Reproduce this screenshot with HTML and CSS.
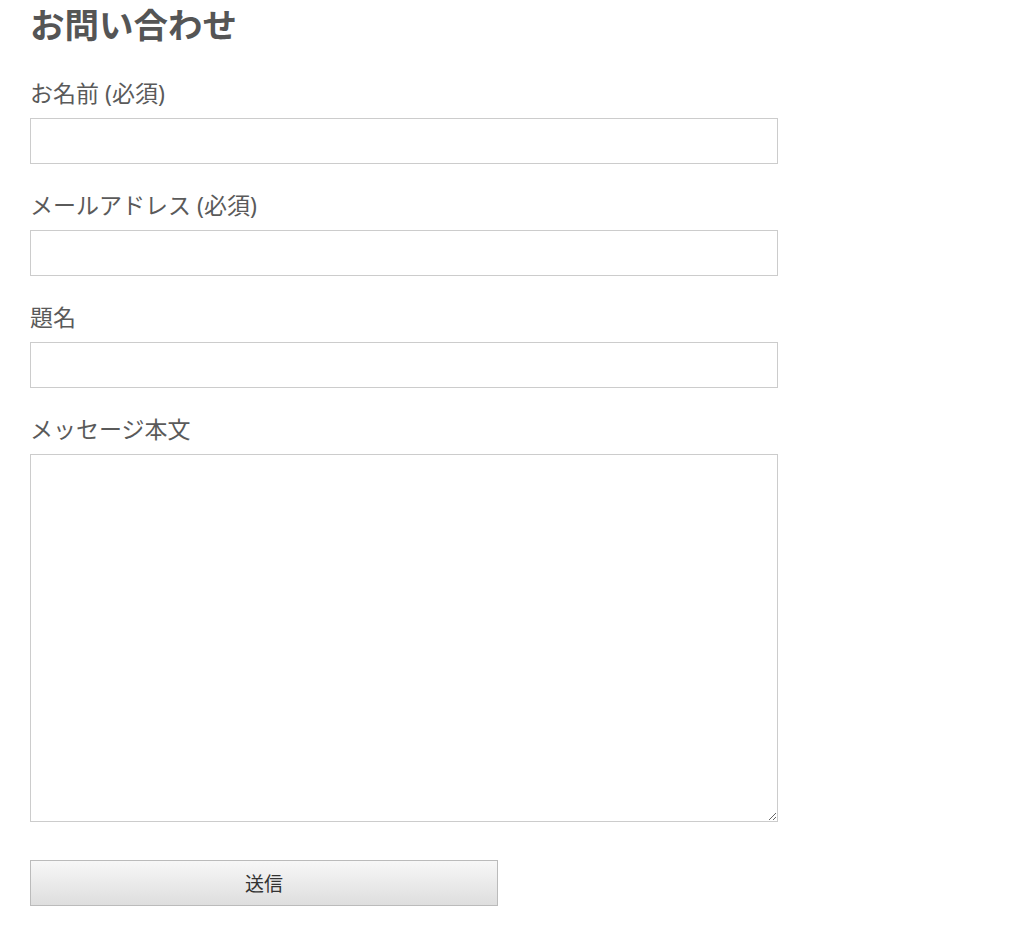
FILE: index.html
```html
<!DOCTYPE html>
<html lang="ja">
<head>
    <meta charset="UTF-8">
    <meta name="viewport" content="width=device-width, initial-scale=1.0">
    <title>お問い合わせ</title>
    <link rel="stylesheet" href="styles.css">
</head>
<body>
    <div class="contact-page">
        <h1 class="contact-title">お問い合わせ</h1>

        <form class="contact-form" onsubmit="return false;">
            <p class="form-field">
                <label for="your-name">お名前 (必須)</label>
                <input type="text" id="your-name" class="form-input">
            </p>
            <p class="form-field">
                <label for="your-email">メールアドレス (必須)</label>
                <input type="email" id="your-email" class="form-input">
            </p>
            <p class="form-field">
                <label for="your-subject">題名</label>
                <input type="text" id="your-subject" class="form-input">
            </p>
            <p class="form-field">
                <label for="your-message">メッセージ本文</label>
                <textarea id="your-message" class="form-input form-textarea"></textarea>
            </p>
            <p class="form-submit">
                <button type="submit" class="submit-button">送信</button>
            </p>
        </form>
    </div>
</body>
</html>
```

FILE: styles.css
```css
* {
    margin: 0;
    padding: 0;
    box-sizing: border-box;
}

body {
    font-family: "Noto Sans", "Noto Sans CJK JP", sans-serif;
    background: #fff;
    color: #555;
}

.contact-page {
    padding: 0 30px;
    width: 808px;
}

.contact-title {
    font-size: 34.5px;
    font-weight: 700;
    line-height: 50px;
    color: #555;
    margin-bottom: 30px;
}

.form-field {
    margin-bottom: 28px;
}

.form-field label {
    display: block;
    font-size: 23px;
    line-height: 26px;
    margin-bottom: 12px;
    color: #5a5a5a;
}

.form-input {
    display: block;
    width: 748px;
    height: 46px;
    border: 1px solid #ccc;
    background: #fff;
    font-family: inherit;
    font-size: 18px;
    padding: 0 10px;
}

.form-textarea {
    height: 368px;
    padding: 10px;
    resize: vertical;
}

.form-submit {
    margin-top: 38px;
}

.submit-button {
    width: 468px;
    height: 46px;
    border: 1px solid #bbb;
    background: linear-gradient(to bottom, #f7f7f7, #dedede);
    font-family: inherit;
    font-size: 19px;
    color: #333;
    cursor: pointer;
}
```
